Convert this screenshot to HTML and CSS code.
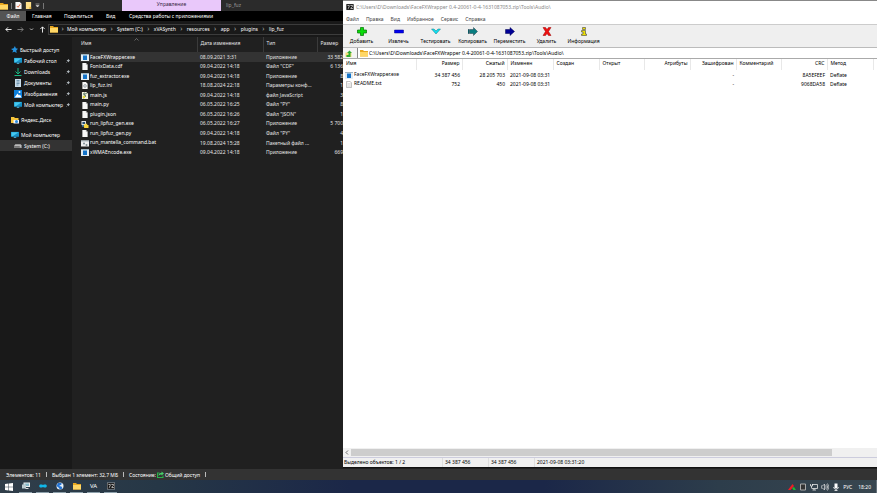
FILE: index.html
```html
<!DOCTYPE html>
<html lang="ru">
<head>
<meta charset="utf-8">
<title>lip_fuz</title>
<link rel="stylesheet" href="styles.css">
</head>
<body>
<svg class="defs" aria-hidden="true">
  <symbol id="folder" viewBox="0 0 16 14"><path d="M0 1h6l2 2h8v11H0z" fill="#e9a820"/><path d="M0 5h16v9H0z" fill="#ffd766"/></symbol>
  <symbol id="exe" viewBox="0 0 16 14"><path d="M0 0h16v14H0z" fill="#e4edf2"/><path d="M0 0h16v2H0z" fill="#9fb4c0"/><path d="M4 3h8v9H4z" fill="#1473c8"/></symbol>
  <symbol id="page" viewBox="0 0 12 16"><path d="M0 0h8l4 4v12H0z" fill="#f7f7f7"/><path d="M8 0l4 4H8z" fill="#aaa"/></symbol>
  <symbol id="ini" viewBox="0 0 12 16"><path d="M0 0h8l4 4v12H0z" fill="#f7f7f7"/><circle cx="6" cy="9" r="3" fill="none" stroke="#8d979d" stroke-width="2"/></symbol>
  <symbol id="js" viewBox="0 0 14 16"><path d="M0 0h10l4 4v12H0z" fill="#f0f0dc"/><path d="M11 3L4 6l5 3-6 5M7 2L3 4" fill="none" stroke="#465" stroke-width="2"/><path d="M2 9h5v5H2z" fill="#e3d735"/></symbol>
  <symbol id="py" viewBox="0 0 16 16"><path d="M0 0h10v9H0z" fill="#f5f5f5"/><path d="M2 2h6v5H2z" fill="#274e72"/><path d="M5 8h3V6h5v3h3v7H6v-3H5z" fill="#f7d43c"/><path d="M1 9h4v4H1z" fill="#3778ae"/></symbol>
  <symbol id="bat" viewBox="0 0 16 14"><path d="M0 1h16v12H0z" fill="#eee"/><path d="M0 1h16v2H0z" fill="#a8b6bd"/><circle cx="6" cy="7" r="2" fill="#7b8a90"/><circle cx="11" cy="10" r="2" fill="#7b8a90"/></symbol>
  <symbol id="monitor" viewBox="0 0 18 16"><path d="M0 1h18v11H0z" fill="#168fc5"/><path d="M1 2h16L4 11H1z" fill="#45c9ef"/><path d="M7 12h4v2h3v1H4v-1h3z" fill="#4babd0"/></symbol>
  <symbol id="down" viewBox="0 0 16 16"><path d="M8 0v11M3 7l5 5 5-5M1 15h14" fill="none" stroke="#17b883" stroke-width="2"/></symbol>
  <symbol id="doc" viewBox="0 0 14 16"><path d="M1 0h12v16H1z" fill="#c8dce9"/><path d="M4 3h6M4 6h6M4 9h6M4 12h4" stroke="#557f9c" stroke-width="1.5"/></symbol>
  <symbol id="image" viewBox="0 0 16 16"><path d="M0 0h16v16H0z" fill="#0c7fdb"/><path d="M1 15l6-8 3 4 2-2 3 6z" fill="#fff"/><circle cx="11" cy="4" r="2" fill="#fff"/></symbol>
  <symbol id="star" viewBox="0 0 16 16"><path d="M9 0l2 5 5 1-4 4 1 6-5-3-5 2 2-5-5-3 6-2z" fill="#2492df"/></symbol>
  <symbol id="drive" viewBox="0 0 18 10"><path d="M3 1h12l3 4v4H0V5z" fill="#bbb"/><path d="M0 5h18v4H0z" fill="#777"/><path d="M13 6h3v2h-3z" fill="#eee"/></symbol>
  <symbol id="pin" viewBox="0 0 12 12"><path d="M7 0l5 5-2 1-2 3-1 1-2-3-4 5-1-1 5-4-3-2 1-1 3-2z" fill="#aeb6bc"/></symbol>
  <symbol id="sevenzip" viewBox="0 0 22 18"><path d="M0 0h22v18H0z" fill="#eee"/><path d="M1 1h20v16H1z" fill="#111"/><path d="M4 5h5v2L6 14M12 5h6v2l-5 5v1h6" fill="none" stroke="#eee" stroke-width="2"/></symbol>
  <symbol id="check" viewBox="0 0 14 16"><path d="M0 0h10l4 4v12H0z" fill="#f7f7f7"/><path d="M3 9l3 3 5-7" fill="none" stroke="#e36232" stroke-width="2"/></symbol>
  <symbol id="note" viewBox="0 0 14 16"><path d="M1 0h12v16H1z" fill="#ffe08a"/><path d="M9 11h4v5H9z" fill="#e9b73f"/></symbol>
  <symbol id="text" viewBox="0 0 12 16"><path d="M.7.7H8l3.300 3.300v11.300H.7z" fill="#fff" stroke="#888" stroke-width="1.400"/><path d="M3 6h6M3 9h6M3 12h6" stroke="#aaa"/></symbol>
</svg>

<main class="desktop">
  <section class="explorer" aria-label="lip_fuz">
    <header class="ex-title">
      <div class="quick">
        <svg class="i8"><use href="#folder"/></svg><i class="bar"></i>
        <svg class="i7"><use href="#check"/></svg>
        <svg class="i7"><use href="#note"/></svg>
        <svg class="i5" viewBox="0 0 10 10"><path d="M1 2h8M2 5h6L5 8z" fill="#ddd" stroke="#ddd"/></svg><i class="bar"></i>
      </div>
      <div class="manage">Управление</div>
      <h1>lip_fuz</h1>
    </header>
    <nav class="tabs">
      <button class="file">Файл</button><button class="home">Главная</button><button class="share">Поделиться</button><button class="view">Вид</button><button class="apps">Средства работы с приложениями</button>
    </nav>
    <div class="address">
      <div class="arrows">
        <svg class="i7" viewBox="0 0 16 16"><path d="M15 8H2M7 3L2 8l5 5" fill="none" stroke="#fff" stroke-width="2"/></svg>
        <svg class="i7" viewBox="0 0 16 16"><path d="M1 8h13M9 3l5 5-5 5" fill="none" stroke="#888" stroke-width="2"/></svg>
        <svg class="i5" viewBox="0 0 10 10"><path d="M2 3l3 3 3-3" fill="none" stroke="#bbb" stroke-width="2"/></svg>
        <svg class="i7" viewBox="0 0 16 16"><path d="M8 15V2M3 7l5-5 5 5" fill="none" stroke="#fff" stroke-width="2"/></svg>
      </div>
      <div class="crumbs">
        <svg class="i8"><use href="#folder"/></svg>
        <i>›</i><a href="#">Мой компьютер</a><i>›</i><a href="#">System (C:)</a><i>›</i><a href="#">xVASynth</a><i>›</i><a href="#">resources</a><i>›</i><a href="#">app</a><i>›</i><a href="#">plugins</a><i>›</i><a href="#">lip_fuz</a>
      </div>
    </div>
    <div class="ex-body">
      <nav class="side">
        <a href="#" class="root"><svg class="i7"><use href="#star"/></svg><span>Быстрый доступ</span></a>
        <a href="#"><svg class="i8"><use href="#monitor"/></svg><span>Рабочий стол</span><svg class="pin"><use href="#pin"/></svg></a>
        <a href="#"><svg class="i8"><use href="#down"/></svg><span>Downloads</span><svg class="pin"><use href="#pin"/></svg></a>
        <a href="#"><svg class="i8"><use href="#doc"/></svg><span>Документы</span><svg class="pin"><use href="#pin"/></svg></a>
        <a href="#"><svg class="i8"><use href="#image"/></svg><span>Изображения</span><svg class="pin"><use href="#pin"/></svg></a>
        <a href="#"><svg class="i8"><use href="#monitor"/></svg><span>Мой компьютер</span><svg class="pin"><use href="#pin"/></svg></a>
        <a href="#" class="root gap"><svg class="i8" viewBox="0 0 16 16"><path d="M0 2h6l2 2h7v10H0z" fill="#f7c53b"/><path d="M5 8h11v7H5z" fill="#f4f7fa"/><circle cx="11" cy="11" r="3" fill="#2b8adf"/></svg><span>Яндекс.Диск</span></a>
        <a href="#" class="root gap"><svg class="i8"><use href="#monitor"/></svg><span>Мой компьютер</span></a>
        <a href="#" class="sel"><svg class="i8"><use href="#drive"/></svg><span>System (C:)</span></a>
      </nav>
      <div class="files-wrap">
      <table class="files">
        <colgroup><col class="f-name"><col class="f-date"><col class="f-type"><col class="f-size"></colgroup>
        <thead><tr><th>Имя<svg class="sort" viewBox="0 0 10 6"><path d="M1 5l4-4 4 4" fill="none" stroke="#aaa"/></svg></th><th>Дата изменения</th><th>Тип</th><th>Размер</th></tr></thead>
        <tbody>
          <tr class="sel"><td><svg><use href="#exe"/></svg>FaceFXWrapper.exe</td><td>08.09.2021 3:31</td><td>Приложение</td><td>33 582</td></tr>
          <tr><td><svg><use href="#page"/></svg>FonixData.cdf</td><td>09.04.2022 14:18</td><td>Файл "CDF"</td><td>6 136</td></tr>
          <tr><td><svg><use href="#exe"/></svg>fuz_extractor.exe</td><td>09.04.2022 14:18</td><td>Приложение</td><td>8</td></tr>
          <tr><td><svg><use href="#ini"/></svg>lip_fuz.ini</td><td>18.08.2024 22:18</td><td>Параметры конф...</td><td>1</td></tr>
          <tr><td><svg><use href="#js"/></svg>main.js</td><td>09.04.2022 14:18</td><td>файл JavaScript</td><td>3</td></tr>
          <tr><td><svg><use href="#page"/></svg>main.py</td><td>06.05.2022 16:25</td><td>Файл "PY"</td><td>8</td></tr>
          <tr><td><svg><use href="#page"/></svg>plugin.json</td><td>06.05.2022 16:26</td><td>Файл "JSON"</td><td>1</td></tr>
          <tr><td><svg><use href="#py"/></svg>run_lipfuz_gen.exe</td><td>06.05.2022 16:27</td><td>Приложение</td><td>5 700</td></tr>
          <tr><td><svg><use href="#page"/></svg>run_lipfuz_gen.py</td><td>09.04.2022 14:18</td><td>Файл "PY"</td><td>4</td></tr>
          <tr><td><svg><use href="#bat"/></svg>run_mantella_command.bat</td><td>19.08.2024 15:28</td><td>Пакетный файл ...</td><td>1</td></tr>
          <tr><td><svg><use href="#exe"/></svg>xWMAEncode.exe</td><td>09.04.2022 14:18</td><td>Приложение</td><td>669</td></tr>
        </tbody>
      </table>
      </div>
    </div>
  </section>

  <section class="zip" aria-label="7-Zip">
    <header class="z-title"><svg class="i8"><use href="#sevenzip"/></svg><h2>C:\Users\D\Downloads\FaceFXWrapper 0.4-20061-0-4-1631087053.zip\Tools\Audio\</h2></header>
    <nav class="menu"><button>Файл</button><button>Правка</button><button>Вид</button><button>Избранное</button><button>Сервис</button><button>Справка</button></nav>
    <div class="tools">
      <button><svg viewBox="0 0 20 18"><path d="M7 1h6v5h6v6h-6v5H7v-5H1V6h6z" fill="#0bdc0b" stroke="#087a08" stroke-width="1.500"/></svg>Добавить</button>
      <button><svg viewBox="0 0 20 18"><path d="M1 6h18v6H1z" fill="#0000f0" stroke="#00008a"/></svg>Извлечь</button>
      <button><svg viewBox="0 0 20 18"><path d="M1 4h5l4 4 4-4h5l-9 10z" fill="#10dff0" stroke="#167b86"/></svg>Тестировать</button>
      <button><svg viewBox="0 0 20 18"><path d="M0 5h2v8H0zM3 5h8V1l8 8-8 8v-4H3z" fill="#087d80" stroke="#123" stroke-width=".8"/></svg>Копировать</button>
      <button><svg viewBox="0 0 20 18"><path d="M1 5h9V1l9 8-9 8v-4H1z" fill="#000096" stroke="#000050"/></svg>Переместить</button>
      <button><svg viewBox="0 0 20 18"><path d="M2 1h5l3 4 3-4h5l-5 8 5 8h-5l-3-4-3 4H2l5-8z" fill="#f01010" stroke="#900"/></svg>Удалить</button>
      <button><svg viewBox="0 0 20 18"><path d="M7 1h6v4H7zM5 7h8v7h2v3H5v-3h3v-4H5z" fill="#eee000" stroke="#444" stroke-width="1.200"/></svg>Информация</button>
    </div>
    <div class="z-address">
      <button aria-label="Вверх"><svg class="i7" viewBox="0 0 14 14"><path d="M1 5h12v9H1z" fill="#f4dc7d"/><path d="M3 14V10h4V6H4l5-5 5 5h-3v8z" fill="#2cab32"/></svg></button>
      <div class="path"><svg class="i8"><use href="#folder"/></svg><input aria-label="Путь" value="C:\Users\D\Downloads\FaceFXWrapper 0.4-20061-0-4-1631087053.zip\Tools\Audio\"></div>
    </div>
    <div class="z-list">
      <table>
        <colgroup><col class="z-name"><col class="z-a"><col class="z-b"><col class="z-a" span="2"><col class="z-b"><col class="z-a" span="2"><col class="z-b"><col class="z-a" span="2"><col></colgroup>
        <thead><tr><th>Имя</th><th class="r">Размер</th><th class="r">Сжатый</th><th>Изменен</th><th>Создан</th><th>Открыт</th><th class="r">Атрибуты</th><th class="r">Зашифрован</th><th>Комментарий</th><th class="r">CRC</th><th>Метод</th><th></th></tr></thead>
        <tbody>
          <tr><td><svg><use href="#exe"/></svg>FaceFXWrapper.exe</td><td class="r">34 387 456</td><td class="r">28 205 703</td><td>2021-09-08 03:31</td><td></td><td></td><td></td><td class="r">-</td><td></td><td class="r">8A5EFEEF</td><td>Deflate</td><td></td></tr>
          <tr><td><svg><use href="#text"/></svg>README.txt</td><td class="r">752</td><td class="r">450</td><td>2021-09-08 03:31</td><td></td><td></td><td></td><td class="r">-</td><td></td><td class="r">9068DA58</td><td>Deflate</td><td></td></tr>
        </tbody>
      </table>
    </div>
    <div class="scroll"><svg viewBox="0 0 10 10"><path d="M7 1L3 5l4 4" fill="none" stroke="#444" stroke-width="1.500"/></svg><i></i></div>
    <footer class="z-status"><span class="wide">Выделено объектов: 1 / 2</span><span>34 387 456</span><span>34 387 456</span><span>2021-09-08 03:31:20</span></footer>
  </section>
</main>

<footer class="ex-status"><span>Элементов: 11</span><i></i><span>Выбран 1 элемент: 32,7 МБ</span><i></i><div class="state">Состояние:<svg class="i7" viewBox="0 0 14 14"><path d="M0 3h5v2H2v7h9V9h2v5H0z" fill="#28b34b"/><path d="M3 10c0-5 3-6 6-6V1l5 4-5 4V7c-3 0-4 1-6 3z" fill="#45d068"/></svg><span>Общий доступ</span></div><i></i></footer>

<nav class="taskbar">
  <button aria-label="Пуск"><svg viewBox="0 0 16 16"><path d="M0 2l7-1v6.500H0zM8 1l8-1v7.500H8zM0 8.500h7V15l-7-1zM8 8.500h8V16l-8-1z" fill="#fff"/></svg></button>
  <button class="open" aria-label="Компьютер"><svg viewBox="0 0 16 16"><path d="M3 1h13v9H3z" fill="#e9eef0"/><path d="M5 3h9v5H5z" fill="#84b8c9"/><path d="M0 5h8v8H0z" fill="#bccbd0"/><path d="M7 12h6v2H7z" fill="#ddd"/></svg></button>
  <button class="open" aria-label="Связь"><svg viewBox="0 0 16 16"><path d="M2 5h4l2 1 2-1h4l2 3-2 3h-4l-2-1-2 1H2L0 8z" fill="#10b7eb"/></svg></button>
  <button class="open" aria-label="Браузер"><svg viewBox="0 0 16 16"><circle cx="8" cy="8" r="7" fill="#e7f1f8"/><path d="M1 8l3-6 7 0 0 3-5 3 5 1 2 4-5 2-3-4z" fill="#2374d5"/></svg></button>
  <button class="open" aria-label="Проводник"><svg><use href="#folder"/></svg></button>
  <button class="open va">VA</button>
  <button class="open" aria-label="7-Zip"><svg><use href="#sevenzip"/></svg></button>
  <div class="tray">
    <svg viewBox="0 0 16 16"><path d="M0 14L9 2l3 4-7 8z" fill="#f01b24"/><path d="M8 10l4-2 4 6h-5z" fill="#18bd35"/></svg>
    <svg viewBox="0 0 16 16"><path d="M3 2h10v12H3z" fill="#333" stroke="#aaa" stroke-width="2"/></svg>
    <svg viewBox="0 0 16 16"><path d="M4 3h11v8H4M8 11v3M5 14h7M1 2v4h4V2M3 6v5" fill="none" stroke="#eee" stroke-width="1.500"/></svg>
    <svg viewBox="0 0 16 16"><path d="M0 6h3l4-4v12l-4-4H0zM9 5q3 3 0 6M11 3q5 5 0 10M13 1q6 7 0 14" fill="none" stroke="#eee" stroke-width="1.300"/></svg>
    <svg viewBox="0 0 16 16"><path d="M5 1h6v9H5z" fill="#fff"/><path d="M3 8q0 4 5 4t5-4M8 12v3M5 15h6" fill="none" stroke="#fff" stroke-width="1.500"/></svg>
    <span class="lang">РУС</span><time>18:20</time><i></i>
  </div>
</nav>
</body>
</html>
```
FILE: styles.css
```css
* { box-sizing: border-box; }
body {
  margin: 0;
  height: 100vh;
  display: flex;
  flex-direction: column;
  overflow: hidden;
  background: #202020;
  color: #fff;
  font: 5px/8px "Noto Sans", "Open Sans", sans-serif;
  white-space: nowrap;
}
button, input { font: inherit; color: inherit; background: none; border: 0; padding: 0; margin: 0; }
a { color: inherit; text-decoration: none; }
h1, h2 { font: inherit; margin: 0; }
i { font-style: normal; }
svg { flex: none; display: block; }
table { border-collapse: collapse; table-layout: fixed; width: 100%; }
th { font-weight: 400; text-align: left; }
th, td { padding: 0; }
.defs { position: absolute; width: 0; height: 0; }
.i5 { width: 5px; height: 5px; }
.i7 { width: 7px; height: 7px; }
.i8 { width: 8px; height: 8px; }

.desktop { flex: 1; min-height: 0; display: grid; grid-template-columns: 343fr 534fr; }

/* Explorer window */
.explorer { min-width: 0; overflow: hidden; display: flex; flex-direction: column; }
.ex-title { height: 11px; display: flex; background: #2b2b2b; }
.quick { width: 122px; display: flex; align-items: center; gap: 3px; }
.bar { width: 1px; height: 6px; background: #777; }
.manage { width: 99px; background: #e9c8fa; color: #35243d; text-align: center; }
h1 { color: #999; padding: 1px 5px; }
.tabs { height: 10px; display: flex; background: #000; }
.tabs button { text-align: left; }
.tabs .file { width: 26px; margin-right: 6px; background: #545454; text-align: center; }
.tabs .home { width: 32px; }
.tabs .share { width: 42px; }
.tabs .view { width: 23px; }
.address { height: 16px; display: flex; align-items: center; background: #191919; }
.arrows { width: 48px; padding-left: 5px; display: flex; align-items: center; gap: 5px; }
.crumbs { flex: 1; height: 11px; display: flex; align-items: center; border: 1px solid #3c3c3c; border-right: 0; padding-left: 1px; }
.crumbs i { width: 11px; text-align: center; color: #aaa; font-size: 7px; }
.crumbs svg + i { width: 9px; }
.ex-body { flex: 1; display: flex; min-height: 0; }
.side { width: 72px; flex: none; background: #191919; padding-top: 7px; }
.side a { height: 11px; display: flex; align-items: center; padding-left: 14px; padding-right: 2px; gap: 2px; }
.side span { flex: 1; min-width: 0; }
.side .root { padding-left: 11px; }
.side .gap { margin-top: 4px; }
.side .sel { background: #333; }
.pin { width: 4px; height: 4px; }
.files-wrap { flex: 1; min-width: 0; padding-left: 8px; }
.files { height: 120px; }
.f-name { width: 117px; }
.f-date { width: 66px; }
.f-type { width: 54px; }
.files thead th { height: 15px; padding: 0 0 3px 3px; border-right: 1px solid #3b3b3b; color: #e4e4e4; }
.files thead th:last-child { border: 0; }
.files th:first-child { padding-left: 1px; position: relative; }
.files td { padding-left: 3px; color: #e4e4e4; }
.files td:first-child { padding-left: 1px; color: #fff; }
.files td:last-child { text-align: right; }
.files td svg { display: inline-block; vertical-align: middle; width: 8px; height: 7px; margin-right: 1px; }
.files .sel { background: #333; }
.sort { position: absolute; top: 1px; left: 54px; width: 5px; height: 3px; }

/* Archive window */
.zip { min-width: 0; display: flex; flex-direction: column; background: #fff; color: #000; border-top: 1px solid #888; border-bottom: 1px solid #111; margin-bottom: 1px; }
.z-title { height: 12px; display: flex; align-items: center; gap: 2px; padding-left: 3px; color: #888; }
.menu { height: 11px; display: flex; gap: 7px; padding-left: 3px; color: #444; align-items: center; }
.tools { height: 24px; display: flex; background: #efefef; border-top: 1px solid #ccc; border-bottom: 1px solid #bbb; }
.tools button { width: 37px; display: flex; flex-direction: column; align-items: center; padding-top: 2px; gap: 1px; }
.tools svg { width: 10px; height: 9px; }
.z-address { height: 11px; display: flex; border-bottom: 1px solid #aaa; background: #f4f4f4; }
.z-address button { width: 14px; padding-left: 2px; }
.path { flex: 1; display: flex; align-items: center; gap: 1px; padding-left: 2px; border-left: 1px solid #888; background: #fff; }
.path input { flex: 1; height: 8px; outline: 0; }
.z-list { flex: 1; overflow: hidden; }
.z-name { width: 73px; }
.z-a { width: 46px; }
.z-b { width: 45px; }
.z-list th { height: 11px; border-right: 1px solid #e8e8e8; padding: 0 2px 0 3px; vertical-align: top; }
.z-list td { height: 9px; padding: 0 2px 0 3px; }
.z-list th:last-child { border: 0; }
.z-list .r { text-align: right; }
.z-list td:first-child { padding-left: 2px; }
.z-list td svg { display: inline-block; vertical-align: middle; width: 8px; height: 7px; margin-right: 1px; }
.scroll { height: 9px; display: flex; align-items: center; background: #f0f0f0; }
.scroll svg { width: 8px; height: 5px; }
.scroll i { width: 90%; height: 7px; background: #cdcdcd; }
.z-status { height: 10px; display: flex; background: #f0f0f0; border-top: 1px solid #ccd; }
.z-status span { width: 46px; padding-left: 2px; border-left: 1px solid #ddd; }
.z-status .wide { width: 99px; padding-left: 1px; border: 0; }
.z-status span:last-child { flex: 1; }

/* Bars along the bottom */
.ex-status { height: 11px; display: flex; align-items: center; gap: 5px; padding-left: 6px; background: #333; }
.ex-status i { width: 1px; height: 5px; background: #bbb; }
.state { display: flex; align-items: center; gap: 1px; }
.taskbar { height: 13px; display: flex; background: linear-gradient(90deg, #303e4a, #263746 18%, #1b2748 40%, #1b2748 62%, #2d3d4b 82%, #38464f); }
.taskbar button { width: 17px; display: flex; align-items: center; justify-content: center; }
.taskbar svg { width: 8px; height: 8px; }
.taskbar .open { width: 13px; margin: 0 2px; border-bottom: 1px solid #8da0ab; }
.taskbar .va { font-size: 6px; }
.tray { margin-left: auto; display: flex; align-items: center; gap: 3px; }
.tray time { margin: 0 2px 0 3px; }
.tray i { width: 1px; height: 13px; background: #65717a; }
```
